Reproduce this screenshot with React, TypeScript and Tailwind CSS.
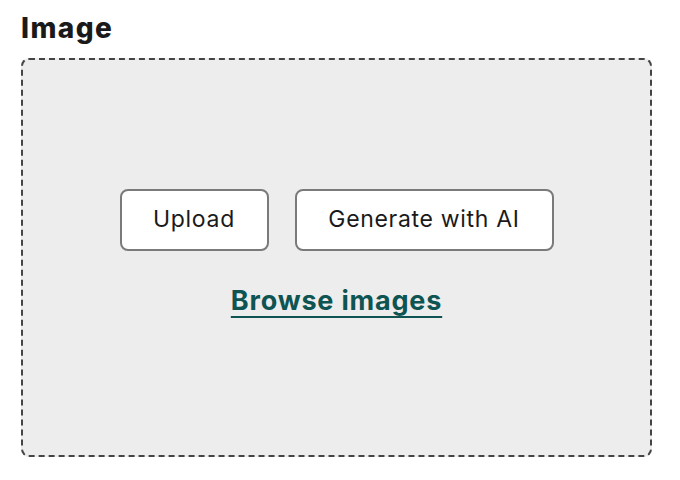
export default function App() {
  return (
    <div className="w-[680px] h-[480px] bg-white px-[21px] pt-[12px] font-['Inter',sans-serif]">
      <h2 className="text-[28px] leading-[32px] font-extrabold tracking-[0.05em] text-[#1a1a1a] mb-[14px]">Image</h2>
      <div className="w-[631px] h-[399px] rounded-[8px] border-2 border-dashed border-[#444] bg-[#ededed] flex flex-col items-center justify-center pb-[10px]">
        <div className="flex gap-[26px]">
          <button className="w-[149px] h-[62px] rounded-[8px] border-2 border-[#7a7a7a] bg-white text-[23px] tracking-[0.03em] text-[#1a1a1a]">
            Upload
          </button>
          <button className="w-[259px] h-[62px] rounded-[8px] border-2 border-[#7a7a7a] bg-white text-[23px] tracking-[0.03em] text-[#1a1a1a]">
            Generate with AI
          </button>
        </div>
        <a
          href="#"
          className="mt-[34px] text-[27px] leading-[32px] font-bold tracking-[0.03em] text-[#0e5452] underline decoration-2 underline-offset-[6px]"
        >
          Browse images
        </a>
      </div>
    </div>
  );
}
